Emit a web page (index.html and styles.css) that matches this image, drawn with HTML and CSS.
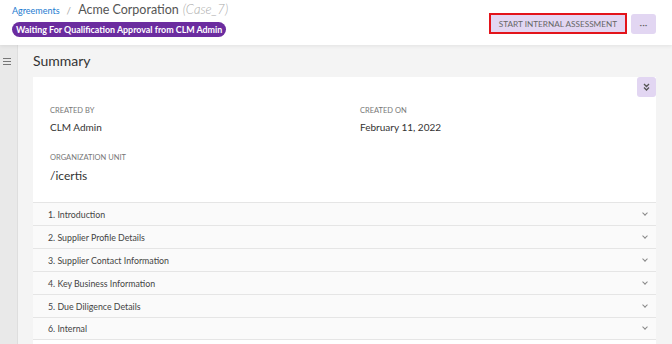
FILE: index.html
```html
<!DOCTYPE html>
<html lang="en">
<head>
    <meta charset="UTF-8">
    <meta name="viewport" content="width=device-width, initial-scale=1.0">
    <title>Acme Corporation - Agreement</title>
    <link rel="stylesheet" href="styles.css">
</head>
<body>
    <header class="page-header">
        <div class="title-block">
            <div class="breadcrumb">
                <a href="#" class="crumb-link">Agreements</a>
                <span class="crumb-sep">/</span>
                <span class="crumb-title">Acme Corporation</span>
                <span class="crumb-case">(Case_7)</span>
            </div>
            <span class="status-pill">Waiting For Qualification Approval from CLM Admin</span>
        </div>
        <div class="actions">
            <button class="btn-assess">START INTERNAL ASSESSMENT</button>
            <button class="btn-more">&middot;&middot;&middot;</button>
        </div>
    </header>

    <div class="layout">
        <aside class="sidebar">
            <svg class="menu-icon" width="8" height="7" viewBox="0 0 8 7">
                <path d="M0 0.5H8M0 3.5H8M0 6.5H8" stroke="#777" stroke-width="1"/>
            </svg>
        </aside>

        <main class="content">
            <h2 class="section-title">Summary</h2>
            <div class="card">
                <div class="card-top">
                    <button class="btn-collapse">
                        <svg width="7" height="8" viewBox="0 0 7 8">
                            <path d="M1 1L3.5 3.5L6 1M1 4.5L3.5 7L6 4.5" fill="none" stroke="#555" stroke-width="1.3"/>
                        </svg>
                    </button>
                </div>
                <div class="fields">
                    <div class="field">
                        <div class="field-label">CREATED BY</div>
                        <div class="field-value">CLM Admin</div>
                    </div>
                    <div class="field">
                        <div class="field-label">CREATED ON</div>
                        <div class="field-value">February 11, 2022</div>
                    </div>
                    <div class="field">
                        <div class="field-label">ORGANIZATION UNIT</div>
                        <div class="field-value big">/icertis</div>
                    </div>
                </div>

                <div class="sections">
                    <div class="section-row"><span>1. Introduction</span><span class="chev"></span></div>
                    <div class="section-row"><span>2. Supplier Profile Details</span><span class="chev"></span></div>
                    <div class="section-row"><span>3. Supplier Contact Information</span><span class="chev"></span></div>
                    <div class="section-row"><span>4. Key Business Information</span><span class="chev"></span></div>
                    <div class="section-row"><span>5. Due Diligence Details</span><span class="chev"></span></div>
                    <div class="section-row"><span>6. Internal</span><span class="chev"></span></div>
                </div>
            </div>
        </main>
    </div>
</body>
</html>
```

FILE: styles.css
```css
* {
    box-sizing: border-box;
}

body {
    margin: 0;
    font-family: Lato, "Open Sans", sans-serif;
    background-color: #f4f4f4;
    color: #333;
    height: 344px;
    overflow: hidden;
}

.page-header {
    display: flex;
    justify-content: space-between;
    align-items: flex-start;
    height: 45px;
    padding: 0 16px 0 12px;
    background-color: white;
    box-shadow: 0 1px 4px rgba(0, 0, 0, 0.08);
    position: relative;
}

.title-block {
    display: flex;
    flex-direction: column;
    align-items: flex-start;
    padding-top: 1px;
}

.breadcrumb {
    display: flex;
    align-items: baseline;
    gap: 5px;
    height: 21px;
}

.crumb-link {
    font-size: 9px;
    color: #1d7bd0;
    text-decoration: none;
}

.crumb-sep {
    font-size: 10px;
    color: #aaa;
    margin: 0 2px;
}

.crumb-title {
    font-size: 12.5px;
    color: #555;
}

.crumb-case {
    font-size: 13px;
    font-style: italic;
    font-weight: 300;
    color: #aaa;
    margin-left: -1px;
}

.status-pill {
    display: inline-block;
    height: 15px;
    line-height: 15px;
    padding: 0 4px;
    border-radius: 8px;
    background-color: #6b2c9f;
    color: white;
    font-size: 8.9px;
    font-weight: bold;
}

.actions {
    display: flex;
    align-items: center;
    gap: 4px;
    padding-top: 13px;
}

.btn-assess {
    height: 21px;
    padding: 0 8px;
    border: 2px solid #e3141b;
    background-color: #e2d6f2;
    color: #666;
    font-family: inherit;
    font-size: 8.2px;
}

.btn-more {
    width: 25px;
    height: 20px;
    border: none;
    border-radius: 3px;
    background-color: #e2d6f2;
    color: #666;
    font-family: inherit;
    font-size: 10px;
    margin-top: 1px;
    padding: 0;
}

.layout {
    display: flex;
    height: 299px;
}

.sidebar {
    width: 18px;
    background-color: #e9e9e9;
    border-right: 1px solid #dedede;
    padding: 13px 0 0 3px;
}

.menu-icon {
    display: block;
}

.content {
    flex: 1;
    padding: 0 16px 0 15px;
}

.section-title {
    margin: 0;
    height: 32px;
    line-height: 32px;
    font-size: 14px;
    font-weight: normal;
    color: #333;
}

.card {
    background-color: white;
    height: 270px;
}

.card-top {
    display: flex;
    justify-content: flex-end;
}

.btn-collapse {
    width: 19px;
    height: 20px;
    border: none;
    border-radius: 3px;
    background-color: #e2d6f2;
    padding: 0;
    display: flex;
    align-items: center;
    justify-content: center;
}

.fields {
    display: grid;
    grid-template-columns: 310px 1fr;
    row-gap: 20px;
    padding: 9px 17px 19px;
}

.field-label {
    font-size: 7.5px;
    color: #777;
    margin-bottom: 6px;
}

.field-value {
    font-size: 10px;
    color: #333;
}

.field-value.big {
    font-size: 12px;
}

.section-row {
    display: flex;
    justify-content: space-between;
    align-items: center;
    height: 23px;
    padding: 0 9px 0 15px;
    background-color: #fafafa;
    border-top: 1px solid #e5e5e5;
    font-size: 8.8px;
    color: #444;
}

.section-row:last-child {
    border-bottom: 1px solid #e5e5e5;
}

.chev {
    width: 4px;
    height: 4px;
    border-right: 1.3px solid #888;
    border-bottom: 1.3px solid #888;
    transform: rotate(45deg);
    margin-bottom: 3px;
}
```
